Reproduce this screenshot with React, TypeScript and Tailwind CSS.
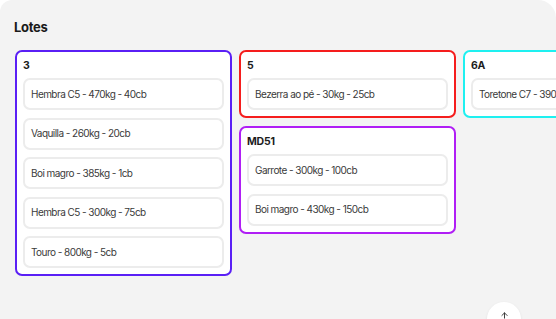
import { ArrowUp } from "lucide-react";

interface Lote {
  name: string;
  color: string;
  items: string[];
}

const columns: Lote[][] = [
  [
    {
      name: "3",
      color: "border-[#5a1ff5]",
      items: [
        "Hembra C5 - 470kg - 40cb",
        "Vaquilla - 260kg - 20cb",
        "Boi magro - 385kg - 1cb",
        "Hembra C5 - 300kg - 75cb",
        "Touro - 800kg - 5cb",
      ],
    },
  ],
  [
    {
      name: "5",
      color: "border-[#f51d1d]",
      items: ["Bezerra ao pé - 30kg - 25cb"],
    },
    {
      name: "MD51",
      color: "border-[#b01ef5]",
      items: ["Garrote - 300kg - 100cb", "Boi magro - 430kg - 150cb"],
    },
  ],
  [
    {
      name: "6A",
      color: "border-[#1ef0f0]",
      items: ["Toretone C7 - 390kg - 12cb"],
    },
  ],
];

function LoteCard({ lote }: { lote: Lote }) {
  return (
    <div
      className={`border-2 ${lote.color} rounded-[7px] bg-white px-[6px] pt-[7px] pb-[6px] flex flex-col`}
    >
      <h3 className="text-[10.5px] leading-[14px] font-bold text-[#1c1c1c] tracking-[-0.2px] mb-[5px]">
        {lote.name}
      </h3>
      <ul className="flex flex-col gap-[7.5px]">
        {lote.items.map((item) => (
          <li
            key={item}
            className="h-[32px] border-2 border-[#ececec] rounded-[7px] bg-white flex items-center px-[6px] text-[10px] tracking-[-0.55px] text-[#3a3a3a] whitespace-nowrap overflow-hidden"
          >
            {item}
          </li>
        ))}
      </ul>
    </div>
  );
}

export default function App() {
  return (
    <div
      className="w-[556px] h-[319px] bg-white overflow-hidden relative"
      style={{ fontFamily: "Inter, 'Noto Sans', sans-serif" }}
    >
      <div className="h-full bg-[#f3f3f3] rounded-tl-[12px] rounded-tr-[18px] pt-[17px]">
        <h2 className="px-[14px] text-[13px] leading-[20px] font-bold tracking-[-0.3px] text-[#1a1a1a]">
          Lotes
        </h2>
        <div className="mt-[13px] pl-[15px] flex gap-[7px] items-start">
          {columns.map((col, i) => (
            <div key={i} className="w-[217px] shrink-0 flex flex-col gap-[8px]">
              {col.map((lote) => (
                <LoteCard key={lote.name} lote={lote} />
              ))}
            </div>
          ))}
        </div>
      </div>
      <button className="absolute left-[487px] top-[302px] w-[34px] h-[34px] rounded-full bg-white shadow-[0_1px_3px_rgba(0,0,0,0.08)] flex items-start justify-center pt-[9px]">
        <ArrowUp size={9} strokeWidth={2.5} className="text-[#333]" />
      </button>
    </div>
  );
}
